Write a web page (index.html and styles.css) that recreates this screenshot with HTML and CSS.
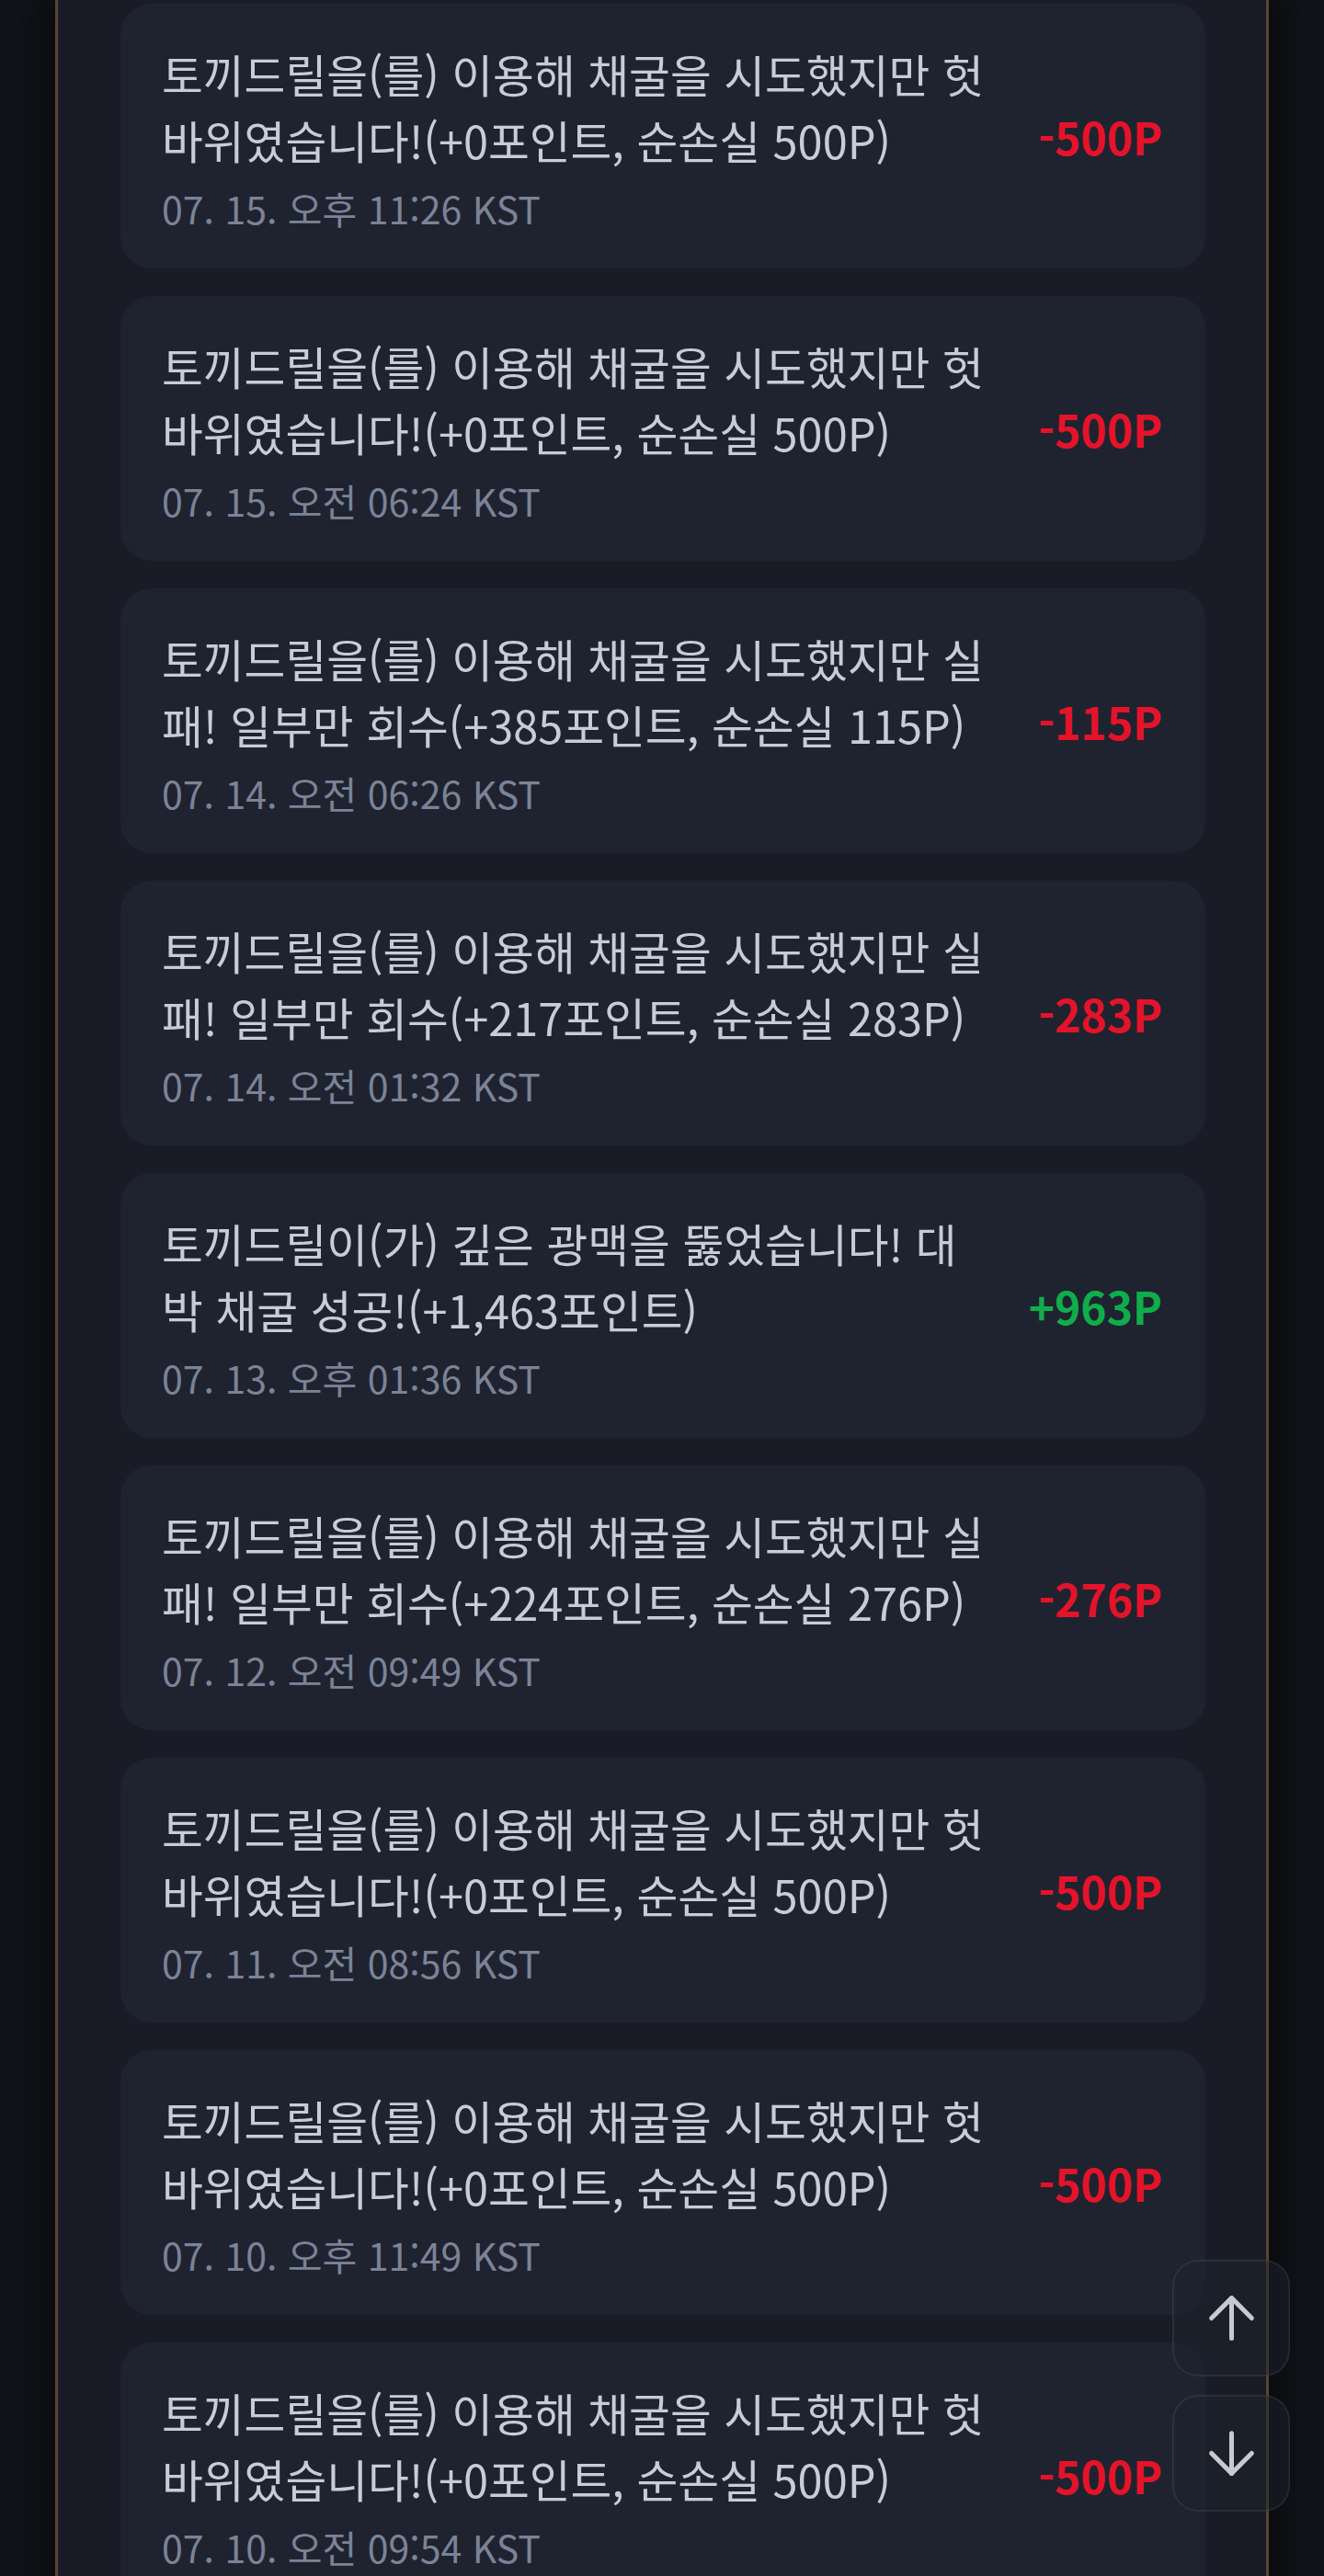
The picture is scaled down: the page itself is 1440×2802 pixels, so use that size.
FILE: index.html
```html
<!DOCTYPE html>
<html lang="ko">
<head>
<meta charset="utf-8">
<title>포인트 내역</title>
<link rel="stylesheet" href="styles.css">
</head>
<body>
<div class="frame">
  <main class="panel">
    <ul class="history">
      <li class="item">
        <div class="info">
          <p class="desc">토끼드릴을(를) 이용해 채굴을 시도했지만 헛바위였습니다!(+0포인트, 순손실 500P)</p>
          <p class="date">07. 15. 오후 11:26 KST</p>
        </div>
        <span class="amount minus">-500P</span>
      </li>
      <li class="item">
        <div class="info">
          <p class="desc">토끼드릴을(를) 이용해 채굴을 시도했지만 헛바위였습니다!(+0포인트, 순손실 500P)</p>
          <p class="date">07. 15. 오전 06:24 KST</p>
        </div>
        <span class="amount minus">-500P</span>
      </li>
      <li class="item">
        <div class="info">
          <p class="desc">토끼드릴을(를) 이용해 채굴을 시도했지만 실패! 일부만 회수(+385포인트, 순손실 115P)</p>
          <p class="date">07. 14. 오전 06:26 KST</p>
        </div>
        <span class="amount minus">-115P</span>
      </li>
      <li class="item">
        <div class="info">
          <p class="desc">토끼드릴을(를) 이용해 채굴을 시도했지만 실패! 일부만 회수(+217포인트, 순손실 283P)</p>
          <p class="date">07. 14. 오전 01:32 KST</p>
        </div>
        <span class="amount minus">-283P</span>
      </li>
      <li class="item">
        <div class="info">
          <p class="desc">토끼드릴이(가) 깊은 광맥을 뚫었습니다! 대박 채굴 성공!(+1,463포인트)</p>
          <p class="date">07. 13. 오후 01:36 KST</p>
        </div>
        <span class="amount plus">+963P</span>
      </li>
      <li class="item">
        <div class="info">
          <p class="desc">토끼드릴을(를) 이용해 채굴을 시도했지만 실패! 일부만 회수(+224포인트, 순손실 276P)</p>
          <p class="date">07. 12. 오전 09:49 KST</p>
        </div>
        <span class="amount minus">-276P</span>
      </li>
      <li class="item">
        <div class="info">
          <p class="desc">토끼드릴을(를) 이용해 채굴을 시도했지만 헛바위였습니다!(+0포인트, 순손실 500P)</p>
          <p class="date">07. 11. 오전 08:56 KST</p>
        </div>
        <span class="amount minus">-500P</span>
      </li>
      <li class="item">
        <div class="info">
          <p class="desc">토끼드릴을(를) 이용해 채굴을 시도했지만 헛바위였습니다!(+0포인트, 순손실 500P)</p>
          <p class="date">07. 10. 오후 11:49 KST</p>
        </div>
        <span class="amount minus">-500P</span>
      </li>
      <li class="item">
        <div class="info">
          <p class="desc">토끼드릴을(를) 이용해 채굴을 시도했지만 헛바위였습니다!(+0포인트, 순손실 500P)</p>
          <p class="date">07. 10. 오전 09:54 KST</p>
        </div>
        <span class="amount minus">-500P</span>
      </li>
    </ul>
  </main>
</div>
<div class="scroll-nav">
  <button class="nav-btn" type="button" aria-label="맨 위로">
    <svg viewBox="0 0 24 24" width="75" height="75" fill="none" stroke="currentColor" stroke-width="1.6" stroke-linecap="round" stroke-linejoin="round"><path d="m5 12 7-7 7 7"/><path d="M12 19V5"/></svg>
  </button>
  <button class="nav-btn" type="button" aria-label="맨 아래로">
    <svg viewBox="0 0 24 24" width="75" height="75" fill="none" stroke="currentColor" stroke-width="1.6" stroke-linecap="round" stroke-linejoin="round"><path d="M12 5v14"/><path d="m19 12-7 7-7-7"/></svg>
  </button>
</div>
</body>
</html>
```

FILE: styles.css
```css
html, body {
  margin: 0;
  padding: 0;
  height: 100%;
  overflow: hidden;
}

body {
  background: #111318;
  font-family: "Noto Sans CJK KR", "Noto Sans", sans-serif;
  color: #c8ccd8;
}

.frame {
  height: 100vh;
  overflow: hidden;
}

.panel {
  box-sizing: border-box;
  max-width: 1320px;
  margin: 0 auto;
  min-height: 100%;
  background: #191c26;
  border-left: 3px solid #574631;
  border-right: 3px solid #574631;
  box-shadow: 0 0 40px 10px rgba(0, 0, 0, 0.55);
  padding: 4px 66px 0 68px;
}

.history {
  list-style: none;
  margin: 0;
  padding: 0;
  display: flex;
  flex-direction: column;
  gap: 30px;
}

.item {
  display: flex;
  align-items: center;
  justify-content: space-between;
  height: 288px;
  box-sizing: border-box;
  padding: 0 47px 0 45px;
  background: #1f2330;
  border-radius: 34px;
}

.info {
  width: 900px;
}

.desc {
  margin: 0;
  font-size: 48.7px;
  line-height: 72px;
  color: #c8ccd9;
}

.date {
  margin: 12px 0 0;
  font-size: 41px;
  line-height: 52px;
  color: #7b8397;
}

.amount {
  font-size: 48px;
  font-weight: 700;
  line-height: 1;
  white-space: nowrap;
}

.amount.minus {
  color: #e5132a;
}

.amount.plus {
  color: #10ad4b;
}

.scroll-nav {
  position: fixed;
  right: 37px;
  bottom: 70px;
  display: flex;
  flex-direction: column;
  gap: 20px;
}

.nav-btn {
  width: 128px;
  height: 127px;
  box-sizing: border-box;
  display: flex;
  align-items: center;
  justify-content: center;
  padding: 0;
  background: rgba(30, 33, 43, 0.5);
  border: 2px solid rgba(255, 255, 255, 0.07);
  border-radius: 28px;
  color: #c9cacf;
  cursor: pointer;
}
```
